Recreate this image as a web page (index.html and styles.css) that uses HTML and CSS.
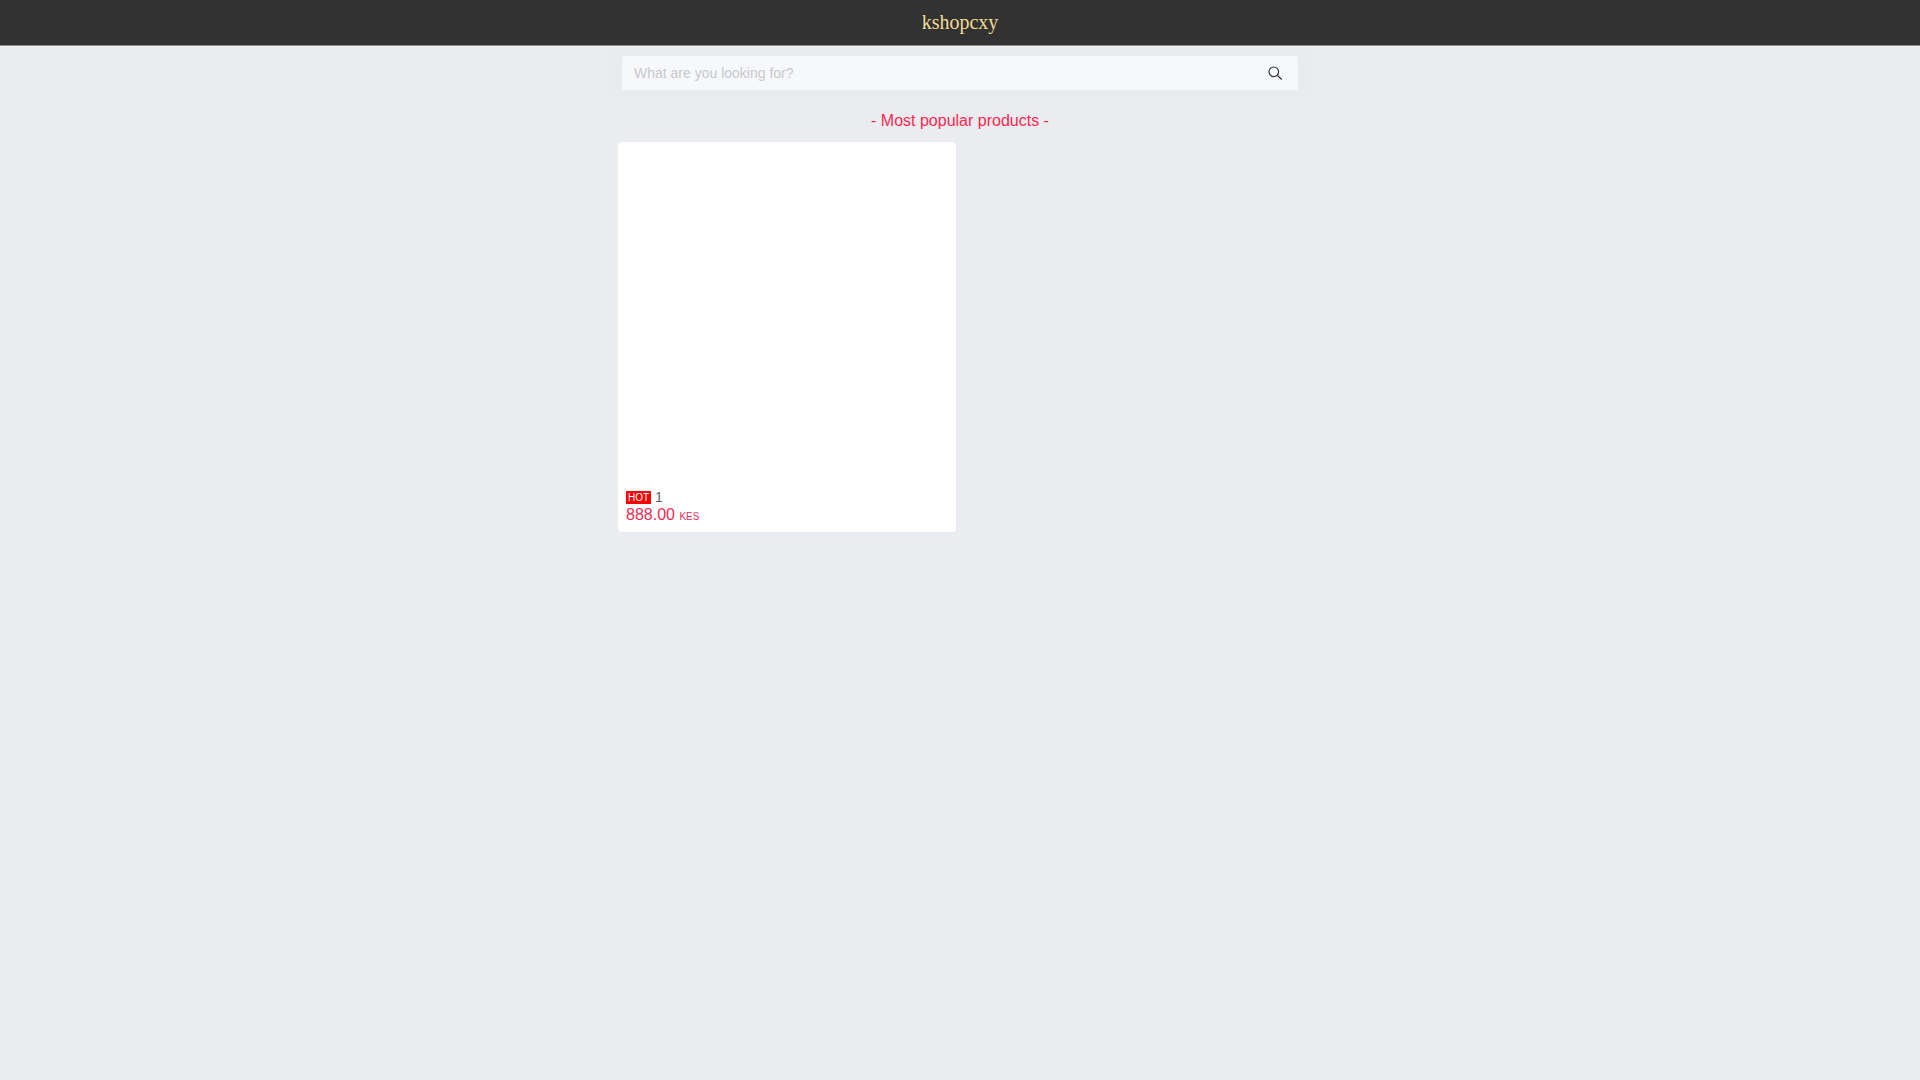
FILE: index.html
```html
<!DOCTYPE html>
<html lang="en">
<head>
<meta charset="utf-8">
<meta name="viewport" content="width=device-width, initial-scale=1">
<title>kshopcxy</title>
<link rel="stylesheet" href="styles.css">
</head>
<body>
<header class="navbar"><h1 class="navbar-title">kshopcxy</h1></header>
<main class="page">
  <form class="search" role="search">
    <div class="search-box">
      <input class="search-input" type="search" aria-label="Search products" placeholder="What are you looking for?">
      <button class="search-button" type="submit" aria-label="Search">
        <svg class="search-icon" viewBox="0 0 16 16" aria-hidden="true"><circle cx="6.8" cy="6.8" r="4.8"/><path d="M10.3 10.3l4.5 4.2"/></svg>
      </button>
    </div>
  </form>
  <h2 class="section-title">- Most popular products -</h2>
  <div class="products">
    <a class="card" href="#">
      <div class="card-image"></div>
      <div class="card-info">
        <div class="card-name"><span class="tag">HOT</span><span>1</span></div>
        <div class="card-price">888.00 <span class="currency">KES</span></div>
      </div>
    </a>
  </div>
</main>
</body>
</html>
```
FILE: styles.css
```css
* { box-sizing: border-box; }
body {
  margin: 0;
  background: #ebecf0;
  font-family: "Liberation Sans", Arial, sans-serif;
}
.navbar {
  display: flex;
  justify-content: center;
  height: 46px;
  padding-top: 7px;
  background: #323233;
  border-bottom: 1px solid #8e8e92;
}
.navbar-title {
  margin: 0;
  color: #f0dc96;
  font: 400 20px/30px "Liberation Serif", "Times New Roman", serif;
}
.page { max-width: 700px; margin: 0 auto; }
.search { padding: 10px 12px; background: #e8ecef; }
.search-box {
  display: flex;
  align-items: center;
  height: 34px;
  padding: 0 12px;
  background: #f7f8fa;
  border-radius: 2px;
}
.search-input {
  flex: 1;
  min-width: 0;
  padding: 0;
  border: 0;
  outline: 0;
  background: transparent;
  color: #323233;
  font: 14px/24px "Liberation Sans", Arial, sans-serif;
}
.search-input::placeholder { color: #c8c9cc; }
.search-button {
  display: flex;
  padding: 0 3px;
  border: 0;
  background: transparent;
}
.search-icon {
  width: 16px;
  height: 16px;
  fill: none;
  stroke: #323233;
  stroke-width: 1.2;
}
.section-title {
  margin: 0;
  padding: 10px 0;
  color: #ff2850;
  font-size: 16px;
  font-weight: 400;
  line-height: 22px;
  text-align: center;
}
.products {
  display: grid;
  grid-template-columns: 1fr 1fr;
  gap: 8px;
  padding: 0 8px;
}
.card {
  overflow: hidden;
  background: #fff;
  border-radius: 4px;
  color: #646566;
  text-decoration: none;
}
.card-image { aspect-ratio: 1; }
.card-info { padding: 8px 8px 6px; }
.card-name {
  display: flex;
  align-items: center;
  gap: 4px;
  font-size: 14px;
  line-height: 18px;
}
.tag {
  padding: 1px 2px 0;
  background: #f00;
  color: #fff;
  font-size: 10px;
  line-height: 12px;
}
.card-price { color: #ee2b57; font-size: 16px; line-height: 18px; }
.currency { font-size: 10px; }
```
